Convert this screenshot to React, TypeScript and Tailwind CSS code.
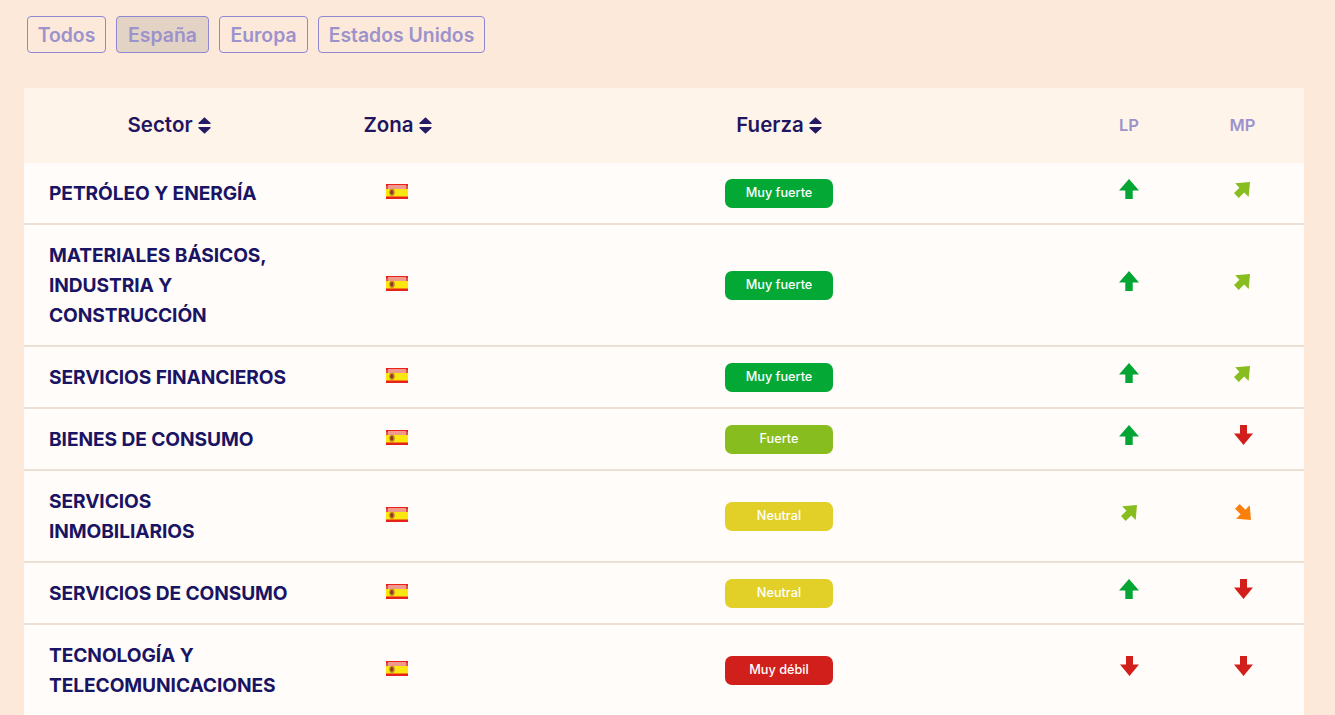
const font = { fontFamily: '"Inter", "Liberation Sans", sans-serif' };

type Dir = "up" | "upRight" | "downRight" | "down";

function SortIcon() {
  return (
    <svg width="13" height="17" viewBox="0 0 13 17" className="ml-[5px] shrink-0">
      <path d="M6.5 0.3 L12.6 6 Q13 7 12 7 L1 7 Q0 7 0.4 6 Z" fill="#231a63" />
      <path d="M6.5 16.7 L12.6 11 Q13 10 12 10 L1 10 Q0 10 0.4 11 Z" fill="#231a63" />
    </svg>
  );
}

function Flag() {
  return (
    <svg width="22" height="15" viewBox="0 0 22 15" className="mb-[3px] mr-px">
      <rect width="22" height="15" fill="#e8211a" />
      <rect x="2" y="1" width="18" height="4" fill="#ee9a8c" />
      <rect y="5" width="22" height="7.5" fill="#fbe70e" />
      <rect x="0" y="2" width="2" height="3" fill="#e0524a" />
      <rect x="20" y="2" width="2" height="3" fill="#e0524a" />
      <ellipse cx="6" cy="8.3" rx="2.8" ry="3.6" fill="#c58a2a" />
      <ellipse cx="5.8" cy="8.3" rx="1.5" ry="2.2" fill="#8a3b12" />
    </svg>
  );
}

function Arrow({ dir }: { dir: Dir }) {
  if (dir === "up")
    return (
      <svg width="20" height="20" viewBox="0 0 20 20" className="mb-2 mr-px">
        <path d="M10 0 L20 11.5 L13.7 11.5 L13.7 20 L6.3 20 L6.3 11.5 L0 11.5 Z" fill="#03a535" />
      </svg>
    );
  if (dir === "down")
    return (
      <svg width="19" height="20" viewBox="0 0 19 20" className="mb-2 ml-px">
        <path d="M9.5 20 L19 8.5 L13 8.5 L13 0 L6 0 L6 8.5 L0 8.5 Z" fill="#d11f1c" />
      </svg>
    );
  if (dir === "upRight")
    return (
      <svg width="16" height="16" viewBox="0 0 17 17" className="mb-[7px] mr-px">
        <path d="M17 0 L15.6 16 L10.8 11.2 L5 17 L0 11.8 L5.8 6 L1.2 1.4 Z" fill="#88bd1f" />
      </svg>
    );
  return (
    <svg width="16" height="16" viewBox="0 0 17 17" className="mb-[9px]">
      <path d="M17 17 L1.2 15.8 L6 11 L0 5 L5 0 L11 6 L15.6 1.2 Z" fill="#fb7f0b" />
    </svg>
  );
}

function Badge({ label, color }: { label: string; color: string }) {
  return (
    <div className={`mt-px flex h-[29px] w-[108px] items-center justify-center rounded-[7px] pb-[2px] text-[12.7px] font-medium text-white ${color}`}>
      {label}
    </div>
  );
}

const rows: { name: string[]; label: string; color: string; lp: Dir; mp: Dir }[] = [
  { name: ["PETRÓLEO Y ENERGÍA"], label: "Muy fuerte", color: "bg-[#03a835]", lp: "up", mp: "upRight" },
  { name: ["MATERIALES BÁSICOS,", "INDUSTRIA Y", "CONSTRUCCIÓN"], label: "Muy fuerte", color: "bg-[#03a835]", lp: "up", mp: "upRight" },
  { name: ["SERVICIOS FINANCIEROS"], label: "Muy fuerte", color: "bg-[#03a835]", lp: "up", mp: "upRight" },
  { name: ["BIENES DE CONSUMO"], label: "Fuerte", color: "bg-[#88bd1f]", lp: "up", mp: "down" },
  { name: ["SERVICIOS", "INMOBILIARIOS"], label: "Neutral", color: "bg-[#e2d029]", lp: "upRight", mp: "downRight" },
  { name: ["SERVICIOS DE CONSUMO"], label: "Neutral", color: "bg-[#e2d029]", lp: "up", mp: "down" },
  { name: ["TECNOLOGÍA Y", "TELECOMUNICACIONES"], label: "Muy débil", color: "bg-[#d11f1c]", lp: "down", mp: "down" },
];

const tabs = [
  { label: "Todos", width: "w-[79px]", active: false },
  { label: "España", width: "w-[93px]", active: true },
  { label: "Europa", width: "w-[89px]", active: false },
  { label: "Estados Unidos", width: "w-[167px]", active: false },
];

export default function App() {
  return (
    <div className="h-screen w-full overflow-hidden bg-[#fde9d9] pl-6 pr-[31px] pt-4" style={font}>
      <div className="ml-[3px] flex gap-[10px]">
        {tabs.map((t) => (
          <button
            key={t.label}
            className={`flex h-[37px] items-center justify-center rounded-[4px] border border-[#8f86d4] pt-[2px] text-[19.4px] font-semibold text-[#9c92cc] ${t.width} ${t.active ? "bg-[#e3d3c5]" : ""}`}
          >
            {t.label}
          </button>
        ))}
      </div>

      <div className="mt-[35px]">
        <div className="flex h-[75px] items-center bg-[#fff4ea] text-[20.5px] font-semibold text-[#1f1560]">
          <div className="flex w-[290px] items-center justify-center"><span>Sector</span><SortIcon /></div>
          <div className="flex w-[167px] items-center justify-center"><span>Zona</span><SortIcon /></div>
          <div className="flex w-[596px] items-center justify-center"><span>Fuerza</span><SortIcon /></div>
          <div className="w-[104px] text-center text-[16.5px] text-[#9c92cc]">LP</div>
          <div className="w-[123px] text-center text-[16.5px] text-[#9c92cc]">MP</div>
        </div>

        {rows.map((r) => (
          <div key={r.name.join(" ")} className="flex items-center border-b-2 border-[#ecdfd3] bg-[#fffcf9] py-[15px]">
            <div className="w-[290px] pl-[25px] text-[19.2px] font-bold leading-[30px] tracking-[-0.1px] text-[#1a1464]">
              {r.name.map((line) => (
                <div key={line} className="whitespace-nowrap">{line}</div>
              ))}
            </div>
            <div className="flex w-[167px] justify-center"><Flag /></div>
            <div className="flex w-[596px] justify-center"><Badge label={r.label} color={r.color} /></div>
            <div className="flex w-[104px] justify-center"><Arrow dir={r.lp} /></div>
            <div className="flex w-[123px] justify-center"><Arrow dir={r.mp} /></div>
          </div>
        ))}
      </div>
    </div>
  );
}
